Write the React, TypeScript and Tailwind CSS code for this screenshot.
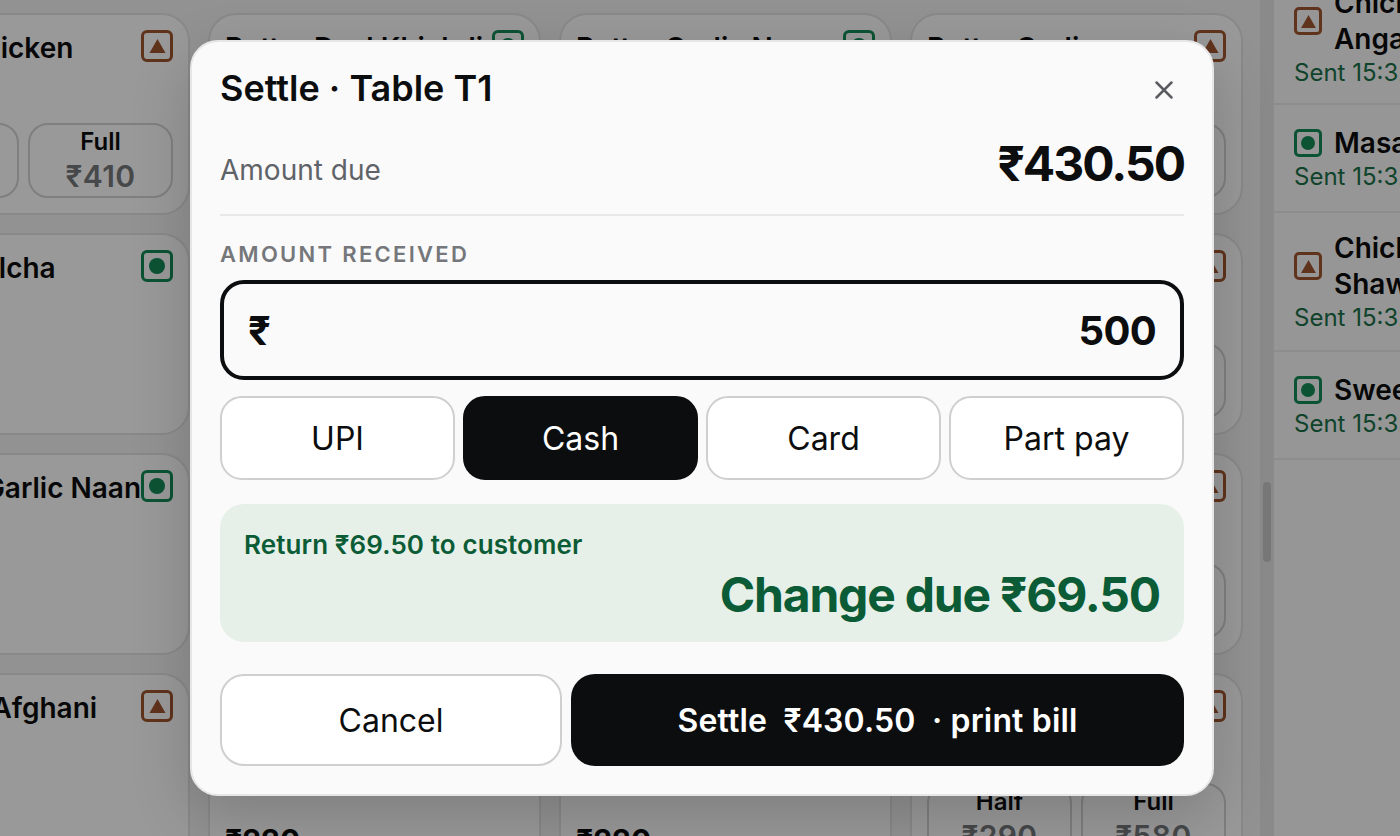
import { X } from "lucide-react";

type Mark = "veg" | "non";

function FoodMark({ kind, small }: { kind: Mark; small?: boolean }) {
  const color = kind === "veg" ? "border-[#148a58]" : "border-[#a0552f]";
  return (
    <span
      className={`flex shrink-0 items-center justify-center border-[3px] bg-transparent ${color} ${
        small ? "h-[28px] w-[28px] rounded-[5px]" : "h-[32px] w-[32px] rounded-[6px]"
      }`}
    >
      {kind === "veg" ? (
        <span className={`rounded-full bg-[#148a58] ${small ? "h-[14px] w-[14px]" : "h-[16px] w-[16px]"}`} />
      ) : (
        <svg viewBox="0 0 16 14" className={small ? "h-[13px] w-[15px]" : "h-[14px] w-[17px]"}>
          <polygon points="8,0 16,14 0,14" fill="#a0552f" />
        </svg>
      )}
    </span>
  );
}

function Pill({ label, price }: { label: string; price: string }) {
  return (
    <div className="flex h-[75px] flex-1 basis-0 flex-col items-center justify-center rounded-[20px] border-2 border-[#d4d4d4]">
      <span className="text-[24px] font-semibold leading-[32px] text-[#0c0d0e]">{label}</span>
      <span className="mt-[-1px] text-[30px] font-semibold leading-[38px] tracking-[0.4px] text-[#76787c]">{price}</span>
    </div>
  );
}

type Item = { name: string; mark: Mark; half?: string; full?: string; price?: string; wrap?: boolean };

function Card({ item }: { item: Item }) {
  return (
    <div className="flex h-[202px] flex-col rounded-[28px] border-2 border-[#e4e4e4] bg-white px-[15px] pb-[15px] pt-[15px]">
      <div className="flex items-start justify-between">
        <span
          className={`text-[28px] font-semibold leading-[36px] text-[#0c0d0e] ${
            item.wrap ? "whitespace-normal" : "whitespace-nowrap"
          }`}
        >
          {item.name}
        </span>
        <FoodMark kind={item.mark} />
      </div>
      <div className="mt-auto flex gap-[9px]">
        {item.half && item.full ? (
          <>
            <Pill label="Half" price={item.half} />
            <Pill label="Full" price={item.full} />
          </>
        ) : (
          <span className="text-[30px] font-bold leading-[36px] text-[#0c0d0e]">{item.price}</span>
        )}
      </div>
    </div>
  );
}

const items: Item[] = [
  { name: "Butter Chicken", mark: "non", half: "₹210", full: "₹410" },
  { name: "Butter Daal Khichdi", mark: "veg", price: "₹220" },
  { name: "Butter Garlic Naan", mark: "veg", price: "₹90" },
  { name: "Butter Garlic Chicken", mark: "non", half: "₹240", full: "₹460", wrap: true },
  { name: "Butter Kulcha", mark: "veg", price: "₹80" },
  { name: "Cheese Naan", mark: "veg", price: "₹120" },
  { name: "Cheese Kulcha", mark: "veg", price: "₹130" },
  { name: "Chicken Tikka", mark: "non", half: "₹250", full: "₹480" },
  { name: "Cheese Garlic Naan", mark: "veg", price: "₹90" },
  { name: "Chilli Paneer", mark: "veg", price: "₹240" },
  { name: "Dal Makhani", mark: "veg", price: "₹260" },
  { name: "Chicken Seekh", mark: "non", half: "₹270", full: "₹520" },
  { name: "Chicken Afghani", mark: "non", price: "₹320" },
  { name: "Jeera Rice", mark: "veg", price: "₹220" },
  { name: "Mix Raita", mark: "veg", price: "₹220" },
  { name: "Chicken Malai", mark: "non", half: "₹290", full: "₹580" },
];

const sent = [
  { name: ["Chicken", "Angara"], mark: "non" as Mark },
  { name: ["Masala Papad"], mark: "veg" as Mark },
  { name: ["Chicken", "Shawarma"], mark: "non" as Mark },
  { name: ["Sweet Lassi"], mark: "veg" as Mark },
];

function Tab({ label, active }: { label: string; active?: boolean }) {
  return (
    <div
      className={`flex h-[84px] items-center justify-center rounded-[22px] border-2 pt-[1px] text-[32px] ${
        active ? "border-[#0c0d0e] bg-[#0c0d0e] text-white" : "border-[#cfcfcf] bg-white text-[#0c0d0e]"
      }`}
    >
      {label}
    </div>
  );
}

export default function App() {
  return (
    <div className="relative flex h-[836px] w-[1400px] overflow-hidden bg-[#f4f4f4] font-['Inter',sans-serif]">
      <div className="ml-[-143px] mt-[13px] grid w-[1386px] shrink-0 grid-cols-[repeat(4,333px)] content-start gap-[18px]">
        {items.map((item, i) => (
          <Card key={i} item={item} />
        ))}
      </div>
      <div className="ml-[17px] flex h-full w-[14px] shrink-0 justify-center bg-[#e6e6e6]">
        <div className="mt-[482px] h-[80px] w-[8px] rounded-full bg-[#c9c9c9]" />
      </div>
      <div className="h-full min-w-0 flex-1 overflow-hidden bg-[#fbfbfb]">
        <div className="mt-[-34px] flex flex-col">
          {sent.map((row, i) => (
            <div
              key={i}
              className={`flex min-h-[108px] flex-col justify-center border-b-2 border-[#ececec] pl-[20px] ${
                i === 0 ? "pb-[14px] pt-[19px]" : "pb-[16px] pt-[17px]"
              }`}
            >
              <div className="flex items-center gap-[12px]">
                <FoodMark kind={row.mark} small />
                <div className="whitespace-nowrap text-[28px] font-semibold leading-[36px] text-[#0c0d0e]">
                  {row.name.map((n) => (
                    <div key={n}>{n}</div>
                  ))}
                </div>
              </div>
              <div className="whitespace-nowrap text-[24px] leading-[32px] text-[#1a7049]">Sent 15:32</div>
            </div>
          ))}
        </div>
      </div>

      <div className="absolute inset-0 bg-black/40" />

      <div className="absolute left-[190px] top-[40px] flex h-[756px] w-[1024px] flex-col rounded-[28px] border-2 border-[#e6e6e6] bg-[#fafafa] px-[28px] pt-[22px] shadow-[0_20px_60px_rgba(0,0,0,0.18)]">
        <div className="flex h-[48px] items-center justify-between">
          <span className="text-[36px] font-semibold leading-[48px] text-[#0c0d0e]">Settle · Table T1</span>
          <X size={30} strokeWidth={2} className="mr-[5px] mt-[3px] text-[#5a5c62]" />
        </div>
        <div className="mt-[22px] flex h-[60px] items-end justify-between">
          <span className="pb-[6px] text-[28px] leading-[36px] text-[#5f6368]">Amount due</span>
          <span className="text-[48px] font-bold leading-[60px] tracking-[-2px] text-[#0c0d0e]">₹430.50</span>
        </div>
        <div className="mt-[20px] h-[2px] bg-[#e8e8e8]" />
        <div className="mt-[23px] h-[30px] text-[22px] font-semibold leading-[30px] tracking-[2.3px] text-[#75777b]">
          AMOUNT RECEIVED
        </div>
        <div className="mt-[11px] flex h-[100px] items-center justify-between rounded-[24px] border-4 border-[#0c0d0e] px-[24px] pt-[2px]">
          <span className="text-[40px] font-bold text-[#0c0d0e]">₹</span>
          <span className="text-[40px] font-bold tracking-[-0.7px] text-[#0c0d0e]">500</span>
        </div>
        <div className="mt-[16px] grid grid-cols-4 gap-[8px]">
          <Tab label="UPI" />
          <Tab label="Cash" active />
          <Tab label="Card" />
          <Tab label="Part pay" />
        </div>
        <div className="mt-[24px] flex h-[138px] flex-col rounded-[24px] bg-[#e6f0e8] px-[24px] pt-[24px]">
          <span className="text-[26px] font-semibold leading-[34px] tracking-[0.1px] text-[#0b5c36]">
            Return ₹69.50 to customer
          </span>
          <span className="mt-[3px] text-right text-[48px] font-bold leading-[60px] tracking-[-1.2px] text-[#0b5c36]">
            Change due ₹69.50
          </span>
        </div>
        <div className="mt-[32px] flex gap-[9px]">
          <div className="flex h-[92px] w-[342px] items-center justify-center rounded-[24px] border-2 border-[#cfcfcf] bg-white pt-[2px] text-[32px] text-[#0c0d0e]">
            Cancel
          </div>
          <div className="flex h-[92px] flex-1 items-center justify-center whitespace-pre rounded-[24px] bg-[#0c0d0e] pt-[2px] text-[32px] font-semibold tracking-[0.15px] text-white">
            Settle  ₹430.50  · print bill
          </div>
        </div>
      </div>
    </div>
  );
}
